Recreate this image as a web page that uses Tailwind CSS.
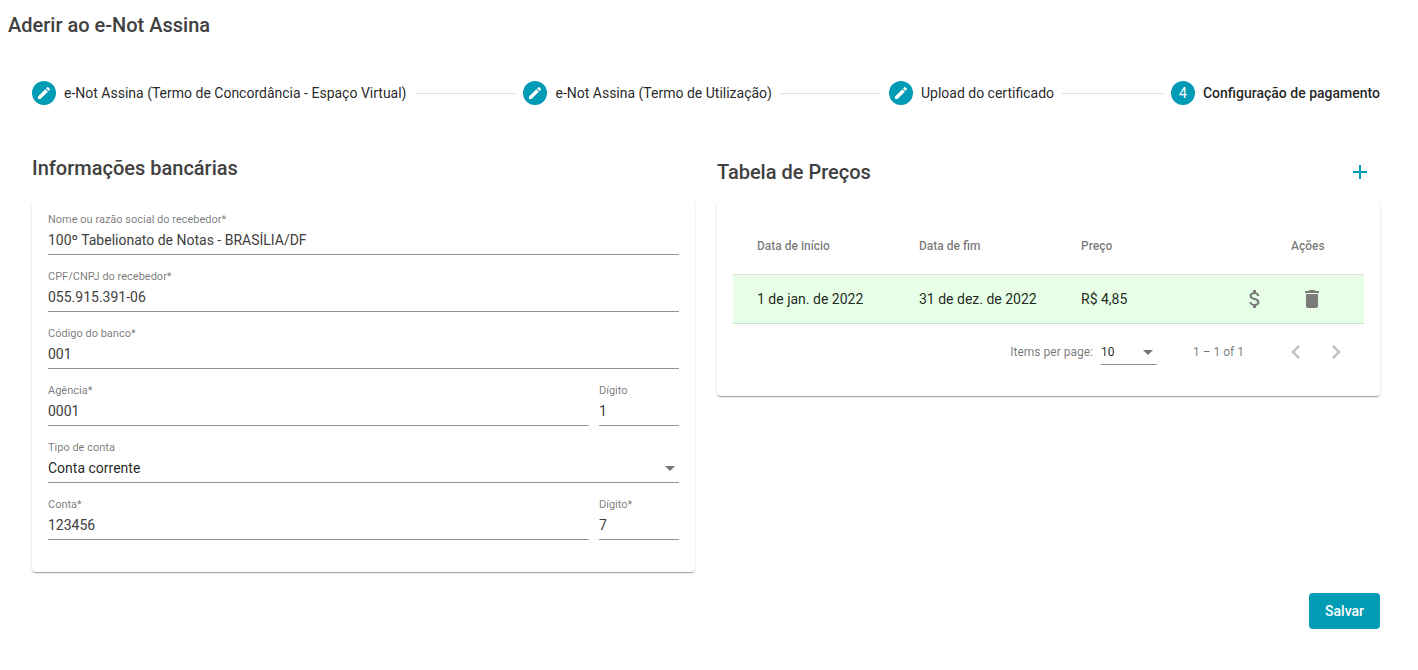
<!DOCTYPE html>
<html lang="pt-BR">
<head>
<meta charset="utf-8">
<meta name="viewport" content="width=device-width, initial-scale=1">
<title>Aderir ao e-Not Assina</title>
<script src="https://cdn.jsdelivr.net/npm/@tailwindcss/browser@4"></script>
</head>
<body class="bg-white font-['Roboto',sans-serif] text-sm text-black/87">
<svg class="hidden" aria-hidden="true">
  <symbol id="pencil" viewBox="0 0 24 24"><path d="M3 17.25V21h3.75L17.81 9.94l-3.75-3.75L3 17.25zM20.71 7.04c.39-.39.39-1.02 0-1.41l-2.34-2.34c-.39-.39-1.02-.39-1.41 0l-1.83 1.83 3.75 3.75 1.83-1.83z"/></symbol>
</svg>

<h1 class="px-2 pt-[13px] text-xl leading-6 font-medium text-[#404040]">Aderir ao e-Not Assina</h1>

<main class="pl-8 pr-[38px] pt-11">
  <ol class="flex items-center gap-2 leading-6 whitespace-nowrap">
    <li class="flex items-center gap-2">
      <span class="flex size-6 items-center justify-center rounded-full bg-[#009bb4] text-white"><svg class="size-4 fill-current"><use href="#pencil"/></svg></span>
      e-Not Assina (Termo de Concordância - Espaço Virtual)
    </li>
    <li class="h-px flex-1 bg-black/12" aria-hidden="true"></li>
    <li class="flex items-center gap-2">
      <span class="flex size-6 items-center justify-center rounded-full bg-[#009bb4] text-white"><svg class="size-4 fill-current"><use href="#pencil"/></svg></span>
      e-Not Assina (Termo de Utilização)
    </li>
    <li class="h-px flex-1 bg-black/12" aria-hidden="true"></li>
    <li class="flex items-center gap-2">
      <span class="flex size-6 items-center justify-center rounded-full bg-[#009bb4] text-white"><svg class="size-4 fill-current"><use href="#pencil"/></svg></span>
      Upload do certificado
    </li>
    <li class="h-px flex-1 bg-black/12" aria-hidden="true"></li>
    <li class="flex items-center gap-2 font-medium" aria-current="step">
      <span class="flex size-6 items-center justify-center rounded-full bg-[#009bb4] font-normal text-white">4</span>
      Configuração de pagamento
    </li>
  </ol>

  <div class="grid grid-cols-2 items-start gap-[22px] pt-[47px]">
    <section>
      <h2 class="pt-1 pb-5 text-xl leading-6 font-medium text-[#404040]">Informações bancárias</h2>
      <form id="bank" class="flex flex-col gap-4 rounded bg-white px-4 pt-[14px] pb-8 shadow-[0_2px_1px_-1px_rgba(0,0,0,0.2),0_1px_1px_0_rgba(0,0,0,0.14),0_1px_3px_0_rgba(0,0,0,0.12)]">
        <div class="flex flex-col gap-1.5 border-b border-[#949494] pb-1.5">
          <label for="nome" class="text-[11px] leading-3 text-black/54">Nome ou razão social do recebedor*</label>
          <input id="nome" class="h-4 w-full leading-4 text-[#404040] outline-none" value="100º Tabelionato de Notas - BRASÍLIA/DF">
        </div>
        <div class="flex flex-col gap-1.5 border-b border-[#949494] pb-1.5">
          <label for="cpf" class="text-[11px] leading-3 text-black/54">CPF/CNPJ do recebedor*</label>
          <input id="cpf" class="h-4 w-full leading-4 text-[#404040] outline-none" value="055.915.391-06">
        </div>
        <div class="flex flex-col gap-1.5 border-b border-[#949494] pb-1.5">
          <label for="banco" class="text-[11px] leading-3 text-black/54">Código do banco*</label>
          <input id="banco" class="h-4 w-full leading-4 text-[#404040] outline-none" value="001">
        </div>
        <div class="flex gap-2.5">
          <div class="flex flex-1 flex-col gap-1.5 border-b border-[#949494] pb-1.5">
            <label for="agencia" class="text-[11px] leading-3 text-black/54">Agência*</label>
            <input id="agencia" class="h-4 w-full leading-4 text-[#404040] outline-none" value="0001">
          </div>
          <div class="flex w-20 flex-col gap-1.5 border-b border-[#949494] pb-1.5">
            <label for="agencia-digito" class="text-[11px] leading-3 text-black/54">Dígito</label>
            <input id="agencia-digito" class="h-4 w-full leading-4 text-[#404040] outline-none" value="1">
          </div>
        </div>
        <div class="flex flex-col gap-1.5 border-b border-[#949494] pb-1.5">
          <label for="tipo" class="text-[11px] leading-3 text-black/54">Tipo de conta</label>
          <div class="relative flex">
            <select id="tipo" class="h-4 w-full appearance-none leading-4 outline-none"><option>Conta corrente</option><option>Conta poupança</option></select>
            <svg class="pointer-events-none absolute top-1.5 right-1 h-[5px] w-2.5 fill-[#757575]" viewBox="0 0 10 5"><path d="M0 0h10L5 5z"/></svg>
          </div>
        </div>
        <div class="flex gap-2.5">
          <div class="flex flex-1 flex-col gap-1.5 border-b border-[#949494] pb-1.5">
            <label for="conta" class="text-[11px] leading-3 text-black/54">Conta*</label>
            <input id="conta" class="h-4 w-full leading-4 text-[#404040] outline-none" value="123456">
          </div>
          <div class="flex w-20 flex-col gap-1.5 border-b border-[#949494] pb-1.5">
            <label for="conta-digito" class="text-[11px] leading-3 text-black/54">Dígito*</label>
            <input id="conta-digito" class="h-4 w-full leading-4 text-[#404040] outline-none" value="7">
          </div>
        </div>
      </form>
    </section>

    <section>
      <div class="flex items-center justify-between pb-2.5">
        <h2 class="text-xl leading-6 font-medium text-[#404040]">Tabela de Preços</h2>
        <button type="button" aria-label="Adicionar preço" class="flex size-10 items-center justify-center text-[#009bb4]"><svg class="size-6 fill-current" viewBox="0 0 24 24"><path d="M19 13h-6v6h-2v-6H5v-2h6V5h2v6h6v2z"/></svg></button>
      </div>
      <div class="rounded bg-white p-4 shadow-[0_2px_1px_-1px_rgba(0,0,0,0.2),0_1px_1px_0_rgba(0,0,0,0.14),0_1px_3px_0_rgba(0,0,0,0.12)]">
        <table class="w-full table-fixed border-separate border-spacing-0 text-left">
          <thead>
            <tr class="h-[57px] text-xs text-black/54">
              <th scope="col" class="w-[186px] border-b border-black/12 pl-6 font-medium">Data de início</th>
              <th scope="col" class="w-[162px] border-b border-black/12 font-medium">Data de fim</th>
              <th scope="col" class="w-[154px] border-b border-black/12 font-medium">Preço</th>
              <th scope="col" class="border-b border-black/12 pl-14 font-medium">Ações</th>
            </tr>
          </thead>
          <tbody>
            <tr class="h-[49px] bg-[#e6ffe6]">
              <td class="border-b border-black/12 pl-6">1 de jan. de 2022</td>
              <td class="border-b border-black/12">31 de dez. de 2022</td>
              <td class="border-b border-black/12">R$ 4,85</td>
              <td class="border-b border-black/12">
                <div class="flex gap-[17px] text-[#7b7b7b]">
                  <button type="button" aria-label="Valores" class="flex size-10 items-center justify-center"><svg class="size-6 fill-current" viewBox="0 0 24 24"><path d="M11.8 10.9c-2.27-.59-3-1.2-3-2.15 0-1.09 1.01-1.85 2.7-1.85 1.78 0 2.44.85 2.5 2.1h2.21c-.07-1.72-1.12-3.3-3.21-3.81V3h-3v2.16c-1.94.42-3.5 1.68-3.5 3.61 0 2.31 1.91 3.46 4.7 4.13 2.5.6 3 1.48 3 2.41 0 .69-.49 1.79-2.7 1.79-2.06 0-2.87-.92-2.98-2.1h-2.2c.12 2.19 1.76 3.42 3.68 3.83V21h3v-2.15c1.95-.37 3.5-1.5 3.5-3.55 0-2.84-2.43-3.81-4.7-4.4z"/></svg></button>
                  <button type="button" aria-label="Excluir" class="flex size-10 items-center justify-center"><svg class="size-6 fill-current" viewBox="0 0 24 24"><path d="M6 19c0 1.1.9 2 2 2h8c1.1 0 2-.9 2-2V7H6v12zM19 4h-3.5l-1-1h-5l-1 1H5v2h14V4z"/></svg></button>
                </div>
              </td>
            </tr>
          </tbody>
        </table>
        <div class="flex h-14 items-center justify-end pr-2 text-xs text-black/54">
          <label for="page-size" class="pr-2">Items per page:</label>
          <div class="relative flex w-14 border-b border-[#949494]">
            <select id="page-size" class="h-6 w-full appearance-none text-black/87 outline-none"><option>10</option><option>25</option></select>
            <svg class="pointer-events-none absolute top-2.5 right-1 h-[5px] w-2.5 fill-[#757575]" viewBox="0 0 10 5"><path d="M0 0h10L5 5z"/></svg>
          </div>
          <span class="pr-8 pl-9">1 – 1 of 1</span>
          <button type="button" disabled aria-label="Previous page" class="flex size-10 items-center justify-center text-black/26"><svg class="size-7 fill-current" viewBox="0 0 24 24"><path d="M15.41 7.41L14 6l-6 6 6 6 1.41-1.41L10.83 12z"/></svg></button>
          <button type="button" disabled aria-label="Next page" class="flex size-10 items-center justify-center text-black/26"><svg class="size-7 fill-current" viewBox="0 0 24 24"><path d="M10 6L8.59 7.41 13.17 12l-4.58 4.59L10 18l6-6z"/></svg></button>
        </div>
      </div>
    </section>
  </div>

  <div class="flex justify-end pt-[21px] pb-8">
    <button type="submit" form="bank" class="h-9 rounded bg-[#009bb4] px-4 font-medium text-white">Salvar</button>
  </div>
</main>
</body>
</html>
